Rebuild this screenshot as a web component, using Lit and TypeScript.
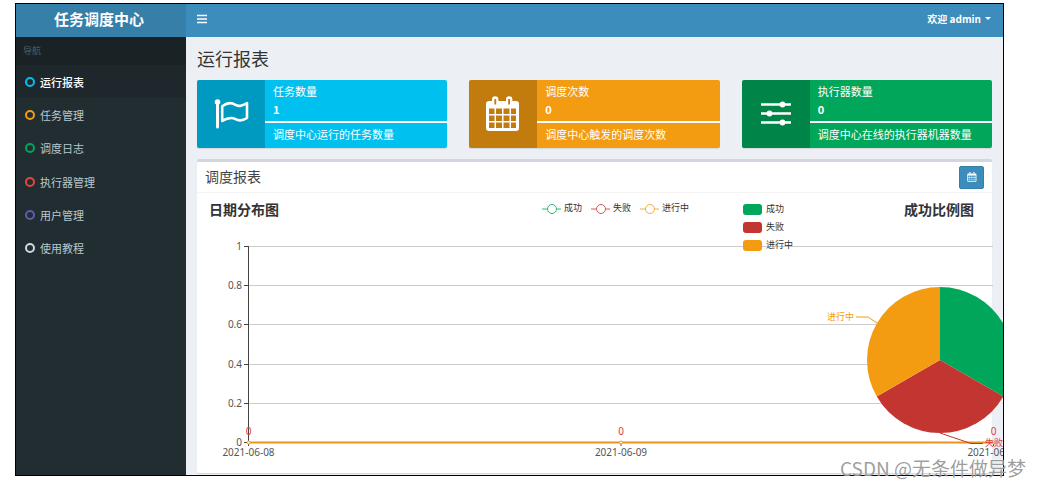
import { LitElement, html, svg, css } from "lit";
import { customElement } from "lit/decorators.js";

const GREEN = "#00a65a";
const RED = "#c23531";
const ORANGE = "#f39c12";

const MENU = [
  { label: "运行报表", tone: "aqua", active: true },
  { label: "任务管理", tone: "yellow" },
  { label: "调度日志", tone: "green" },
  { label: "执行器管理", tone: "red" },
  { label: "用户管理", tone: "purple" },
  { label: "使用教程", tone: "white" },
];

const flagIcon = html`<svg class="glyph" viewBox="0 0 36 36" aria-hidden="true">
  <circle cx="4.500" cy="6" r="2.8" fill="#fff" />
  <path d="M4.500 6V31" stroke="#fff" stroke-width="3" stroke-linecap="round" />
  <path d="M9.200 10.200C13 7.500 18 6 22 8.700C26 11.200 29.500 9.500 34 7.200V22C29.500 25 26 25.300 22 22.800C18 20.800 13.500 22.500 9.200 25Z"
    fill="none" stroke="#fff" stroke-width="2.600" stroke-linejoin="round" />
</svg>`;

const calendarShape = svg`
  <path fill-rule="evenodd" fill="#fff" d="M4 5H7V3.500A3.200 3.200 0 0 1 13.400 3.500V5H21V3.500A3.200 3.200 0 0 1 27.400 3.500V5H31A3 3 0 0 1 34 8V32A3 3 0 0 1 31 35H4A3 3 0 0 1 1 32V8A3 3 0 0 1 4 5Z
    M9.400 3V8.500H11.200V3ZM23.200 3V8.500H25V3Z
    M4 12.500V18H9.500V12.500ZM11 12.500V18H17V12.500ZM18.500 12.500V18H24.500V12.500ZM26 12.500V18H31V12.500Z
    M4 19.500V25H9.500V19.500ZM11 19.500V25H17V19.500ZM18.500 19.500V25H24.500V19.500ZM26 19.500V25H31V19.500Z
    M4 26.500V32H9.500V26.500ZM11 26.500V32H17V26.500ZM18.500 26.500V32H24.500V26.500ZM26 26.500V32H31V26.500Z" />`;
const calendarIcon = html`<svg class="glyph" viewBox="0 0 36 36" aria-hidden="true">${calendarShape}</svg>`;

const slidersIcon = html`<svg class="glyph" viewBox="0 0 36 36" aria-hidden="true">
  <path d="M3 8.500H33M3 17.500H33M3 26.500H33" stroke="#fff" stroke-width="2.6" />
  <g fill="#fff"><circle cx="24.500" cy="8.500" r="2.900" /><circle cx="11.500" cy="17.500" r="2.900" /><circle cx="24.500" cy="26.500" r="2.900" /></g>
</svg>`;

const CARDS = [
  { tone: "aqua", icon: flagIcon, title: "任务数量", value: "1", note: "调度中心运行的任务数量" },
  { tone: "yellow", icon: calendarIcon, title: "调度次数", value: "0", note: "调度中心触发的调度次数" },
  { tone: "green", icon: slidersIcon, title: "执行器数量", value: "0", note: "调度中心在线的执行器机器数量" },
];

const AXIS_X = 51;
const AXIS_END = 796;
const BASE_Y = 249;
const TOP_Y = 53;
const TICKS = ["0", "0.2", "0.4", "0.6", "0.8", "1"];
const DATES = ["2021-06-08", "2021-06-09", "2021-06-10"];
const PIE = { x: 743, y: 167, r: 73 };

function slice(from: number, to: number) {
  const point = (deg: number) => {
    const a = ((deg - 90) * Math.PI) / 180;
    return `${PIE.x + PIE.r * Math.cos(a)} ${PIE.y + PIE.r * Math.sin(a)}`;
  };
  return `M${PIE.x} ${PIE.y}L${point(from)}A${PIE.r} ${PIE.r} 0 0 1 ${point(to)}Z`;
}

@customElement("report-charts")
export class ReportCharts extends LitElement {
  static styles = css`
    :host { display: block; }
    .plot { display: block; width: 100%; height: auto; overflow: visible; }
    text { font: 10px "Noto Sans", "Noto Sans CJK SC", sans-serif; fill: #555; dominant-baseline: central; }
    .title { font: bold 14px "Noto Sans CJK SC", sans-serif; fill: #333; }
    .legend { font: 9px "Noto Sans CJK SC", sans-serif; fill: #333; }
    .end { text-anchor: end; }
    .mid { text-anchor: middle; }
    .red { fill: #d9403c; }
    .orange { fill: #f39c12; }
    .grid { stroke: #ccc; }
    .axis { stroke: #444; }
  `;

  private renderLine() {
    const step = (BASE_Y - TOP_Y) / 5;
    return svg`
      <text class="title" x="12" y="16">日期分布图</text>
      ${[["成功", GREEN, 355], ["失败", RED, 404], ["进行中", ORANGE, 453]].map(
        ([name, color, x]) => svg`
          <g stroke=${color} opacity="0.8">
            <path d=${`M${Number(x) - 10} 16h19`} />
            <circle cx=${x} cy="16" r="4.5" fill="#fff" />
          </g>
          <text class="legend" x=${Number(x) + 12} y="14">${name}</text>`
      )}
      ${TICKS.map((label, i) => {
        const y = Math.round(BASE_Y - i * step) + 0.5;
        return svg`
          <path class="grid" d=${`M${AXIS_X} ${y}H${AXIS_END}`} />
          <path class="axis" d=${`M${AXIS_X - 4} ${y}h4`} />
          <text class="end" x=${AXIS_X - 6} y=${y - 1}>${label}</text>`;
      })}
      <path class="axis" d=${`M${AXIS_X + 0.5} ${TOP_Y}V${BASE_Y + 4}`} />
      <path d=${`M${AXIS_X} ${BASE_Y + 0.5}H${AXIS_END}`} stroke="#e8941a" stroke-width="2" />
      ${DATES.map((date, i) => {
        const x = AXIS_X + 0.5 + (i * (AXIS_END - AXIS_X)) / 2;
        return svg`
          <path class="axis" d=${`M${x} ${BASE_Y}v4`} />
          <circle cx=${x} cy=${BASE_Y + 0.5} r="1.5" fill="#fff" stroke=${ORANGE} />
          <text class="mid red" x=${x} y="238">0</text>
          <text class="mid" x=${x} y="259">${date}</text>`;
      })}`;
  }

  private renderPie() {
    return svg`
      ${[["成功", GREEN], ["失败", RED], ["进行中", ORANGE]].map(
        ([name, color], i) => svg`
          <rect x="546" y=${11 + i * 18} width="19" height="11" rx="3" fill=${color} />
          <text class="legend" x="569" y=${15 + i * 18}>${name}</text>
          <path d=${slice(i * 120, i * 120 + 120)} fill=${color} />`
      )}
      <text class="title end" x="777" y="16">成功比例图</text>
      <path d="M680 130L671 124H659" fill="none" stroke=${ORANGE} />
      <text class="legend end orange" x="657" y="123">进行中</text>
      <path d="M743 240L774 250.500H786" fill="none" stroke=${RED} />
      <text class="legend red" x="788" y="249">失败</text>`;
  }

  render() {
    return html`<svg class="plot" viewBox="0 0 795 280" role="img" aria-label="调度报表">
      ${this.renderLine()}${this.renderPie()}
    </svg>`;
  }
}

@customElement("app-root")
export class AppRoot extends LitElement {
  static styles = css`
    :host {
      display: block;
      position: relative;
      padding: 3px 37px 13px 15px;
      background: #fff;
      color: #333;
      font: 11px/18px "Noto Sans CJK SC", sans-serif;
    }
    * { box-sizing: border-box; }
    h1, h2, p, ul { margin: 0; padding: 0; }
    a { color: inherit; text-decoration: none; }
    button { font: inherit; color: #fff; border: 0; padding: 0; background: none; cursor: pointer; display: flex; align-items: center; }
    .frame { display: grid; grid-template-columns: 170px minmax(0, 1fr); grid-template-rows: 33px auto; border: 1px solid #000; overflow: hidden; background: #ecf0f5; }
    .logo { display: flex; align-items: center; justify-content: center; padding: 0 4px 4px 0; background: #367fa9; color: #fff; font-size: 15px; font-weight: bold; }
    .bar { display: flex; align-items: center; justify-content: space-between; padding: 0 12px 4px 11px; background: #3c8dbc; color: #fff; }
    .bars { width: 10px; height: 10px; }
    .user { gap: 4px; font-size: 10px; font-weight: bold; }
    .caret { border: 3px solid transparent; border-top-color: #fff; border-bottom: 0; }
    .side { background: #222d32; }
    .section { height: 28px; padding: 0 7px; background: #1a2226; color: #4b646f; font-size: 9px; line-height: 28px; }
    .menu { display: grid; grid-auto-rows: 1fr; height: 200px; list-style: none; color: #b8c7ce; }
    .item { display: flex; align-items: center; gap: 5px; height: 100%; padding: 0 9px; }
    .item.active { background: #1e282c; color: #fff; font-weight: 500; }
    .ring { width: 10px; height: 10px; border: 2px solid; border-radius: 50%; }
    .ring.aqua { color: #00c0ef; }
    .ring.yellow { color: #f39c12; }
    .ring.green { color: #00a65a; }
    .ring.red { color: #dd4b39; }
    .ring.purple { color: #605ca8; }
    .ring.white { color: #d2d6de; }
    .main { padding: 9px 11px 2px; }
    .heading { font-size: 18px; line-height: 24px; font-weight: normal; }
    .cards { display: grid; grid-template-columns: repeat(3, minmax(0, 1fr)); gap: 22px; margin: 10px 0 11px; }
    .card { display: flex; height: 68px; border-radius: 2px; overflow: hidden; color: #fff; box-shadow: 0 1px 1px rgba(0, 0, 0, 0.1); }
    .card.aqua { background: #00c0ef; }
    .card.yellow { background: #f39c12; }
    .card.green { background: #00a65a; }
    .badge { display: grid; place-items: center; flex: 0 0 68px; background: rgba(0, 0, 0, 0.2); }
    .glyph { width: 36px; height: 36px; }
    .facts { flex: 1; min-width: 0; padding-top: 2px; }
    .facts p { padding: 0 8px; white-space: nowrap; }
    .facts .value { font-weight: bold; }
    .rule { height: 2px; margin: 3px 0 2px; background: #fff; }
    .box { background: #fff; border-top: 3px solid #d2d6de; border-radius: 2px; box-shadow: 0 1px 1px rgba(0, 0, 0, 0.1); }
    .box-head { display: flex; align-items: center; justify-content: space-between; height: 31px; padding: 0 8px; border-bottom: 1px solid #f4f4f4; }
    .box-title { padding-bottom: 3px; font-size: 14px; font-weight: normal; color: #444; }
    .range { width: 25px; height: 23px; justify-content: center; background: #3c8dbc; border: 1px solid #367fa9; border-radius: 2px; }
    .small { width: 10px; height: 10px; }
    .mark { position: absolute; right: 15px; bottom: 8px; font-size: 19px; line-height: 26px; color: rgba(90, 90, 90, 0.6); text-shadow: 0 0 1px #fff; }
  `;

  render() {
    return html`
      <div class="frame">
        <a class="logo" href="#">任务调度中心</a>
        <header class="bar">
          <button aria-label="切换导航">
            <svg class="bars" viewBox="0 0 10 10"><path d="M0 1.500H10M0 5H10M0 8.500H10" stroke="#fff" stroke-width="1.500" /></svg>
          </button>
          <button class="user">欢迎 admin <span class="caret"></span></button>
        </header>
        <nav class="side">
          <div class="section">导航</div>
          <ul class="menu">
            ${MENU.map(
              (m) => html`<li><a class="item ${m.active ? "active" : ""}" href="#"><span class="ring ${m.tone}"></span>${m.label}</a></li>`
            )}
          </ul>
        </nav>
        <main class="main">
          <h1 class="heading">运行报表</h1>
          <section class="cards">
            ${CARDS.map(
              (c) => html`<article class="card ${c.tone}">
                <span class="badge">${c.icon}</span>
                <div class="facts">
                  <p>${c.title}</p>
                  <p class="value">${c.value}</p>
                  <div class="rule"></div>
                  <p>${c.note}</p>
                </div>
              </article>`
            )}
          </section>
          <section class="box">
            <div class="box-head">
              <h2 class="box-title">调度报表</h2>
              <button class="range" aria-label="选择日期">
                <svg class="small" viewBox="0 0 36 36">${calendarShape}</svg>
              </button>
            </div>
            <report-charts></report-charts>
          </section>
        </main>
      </div>
      <span class="mark">CSDN @无条件做异梦</span>
    `;
  }
}
